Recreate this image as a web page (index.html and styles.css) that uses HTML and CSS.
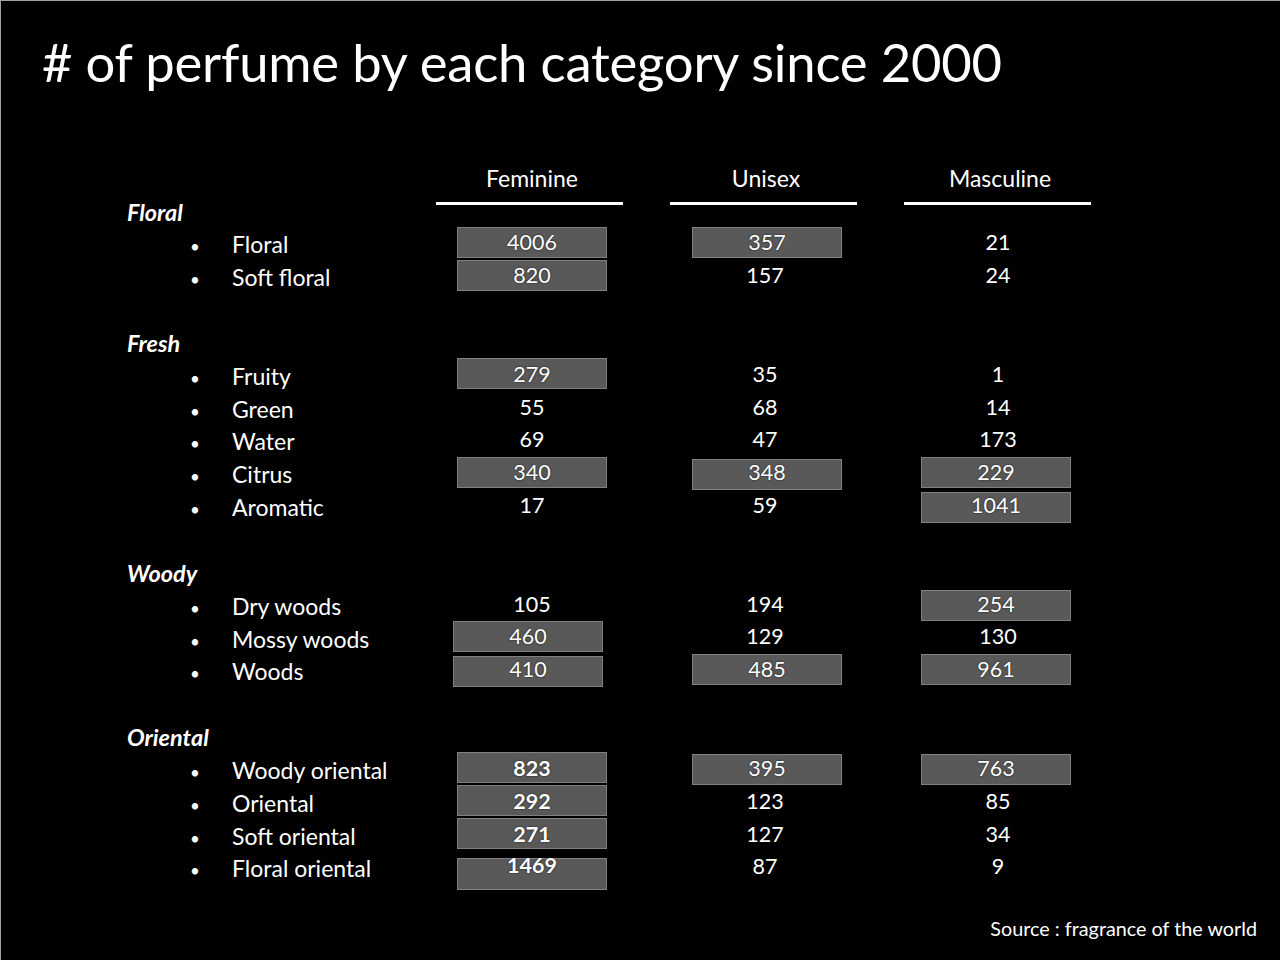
FILE: index.html
```html
<!DOCTYPE html>
<html>
<head>
<meta charset="utf-8">
<link rel="stylesheet" href="styles.css">
</head>
<body>
<div class="slide">
  <h1 class="title"># of perfume by each category since 2000</h1>
  <div class="table">
    <div class="cell label-cell"><div class="group">Floral</div></div>
    <div class="col-head">Feminine</div>
    <div class="col-head">Unisex</div>
    <div class="col-head">Masculine</div>

    <div class="item"><span class="bullet">•</span>Floral</div>
    <div class="val fem"><div class="box hl">4006</div></div>
    <div class="val uni"><div class="box hl">357</div></div>
    <div class="val mas"><div class="box">21</div></div>

    <div class="item"><span class="bullet">•</span>Soft floral</div>
    <div class="val fem"><div class="box hl">820</div></div>
    <div class="val uni"><div class="box">157</div></div>
    <div class="val mas"><div class="box">24</div></div>

    <div class="spacer"></div>

    <div class="group-row"><div class="group">Fresh</div></div>

    <div class="item"><span class="bullet">•</span>Fruity</div>
    <div class="val fem"><div class="box hl">279</div></div>
    <div class="val uni"><div class="box">35</div></div>
    <div class="val mas"><div class="box">1</div></div>

    <div class="item"><span class="bullet">•</span>Green</div>
    <div class="val fem"><div class="box">55</div></div>
    <div class="val uni"><div class="box">68</div></div>
    <div class="val mas"><div class="box">14</div></div>

    <div class="item"><span class="bullet">•</span>Water</div>
    <div class="val fem"><div class="box">69</div></div>
    <div class="val uni"><div class="box">47</div></div>
    <div class="val mas"><div class="box">173</div></div>

    <div class="item"><span class="bullet">•</span>Citrus</div>
    <div class="val fem"><div class="box hl">340</div></div>
    <div class="val uni"><div class="box hl down">348</div></div>
    <div class="val mas"><div class="box hl">229</div></div>

    <div class="item"><span class="bullet">•</span>Aromatic</div>
    <div class="val fem"><div class="box">17</div></div>
    <div class="val uni"><div class="box">59</div></div>
    <div class="val mas"><div class="box hl down">1041</div></div>

    <div class="spacer"></div>

    <div class="group-row"><div class="group">Woody</div></div>

    <div class="item"><span class="bullet">•</span>Dry woods</div>
    <div class="val fem"><div class="box">105</div></div>
    <div class="val uni"><div class="box">194</div></div>
    <div class="val mas"><div class="box hl down">254</div></div>

    <div class="item"><span class="bullet">•</span>Mossy woods</div>
    <div class="val fem"><div class="box hl left">460</div></div>
    <div class="val uni"><div class="box">129</div></div>
    <div class="val mas"><div class="box">130</div></div>

    <div class="item"><span class="bullet">•</span>Woods</div>
    <div class="val fem"><div class="box hl left down">410</div></div>
    <div class="val uni"><div class="box hl">485</div></div>
    <div class="val mas"><div class="box hl">961</div></div>

    <div class="spacer"></div>

    <div class="group-row"><div class="group">Oriental</div></div>

    <div class="item"><span class="bullet">•</span>Woody oriental</div>
    <div class="val fem"><div class="box hl b">823</div></div>
    <div class="val uni"><div class="box hl down">395</div></div>
    <div class="val mas"><div class="box hl down">763</div></div>

    <div class="item"><span class="bullet">•</span>Oriental</div>
    <div class="val fem"><div class="box hl b">292</div></div>
    <div class="val uni"><div class="box">123</div></div>
    <div class="val mas"><div class="box">85</div></div>

    <div class="item"><span class="bullet">•</span>Soft oriental</div>
    <div class="val fem"><div class="box hl b">271</div></div>
    <div class="val uni"><div class="box">127</div></div>
    <div class="val mas"><div class="box">34</div></div>

    <div class="item"><span class="bullet">•</span>Floral oriental</div>
    <div class="val fem"><div class="box hl b low">1469</div></div>
    <div class="val uni"><div class="box">87</div></div>
    <div class="val mas"><div class="box">9</div></div>
  </div>
  <div class="source">Source : fragrance of the world</div>
</div>
</body>
</html>
```

FILE: styles.css
```css
* { box-sizing: border-box; }
html, body { margin: 0; padding: 0; background: #000; }
.slide {
  width: 1280px;
  height: 960px;
  background: #000;
  color: #fff;
  font-family: Lato, "Open Sans", sans-serif;
  border-top: 1px solid #a0a0a0;
  border-left: 1px solid #a0a0a0;
  overflow: hidden;
  display: flex;
  flex-direction: column;
}
.title {
  margin: 0;
  padding: 31px 0 0 41px;
  font-size: 52.6px;
  line-height: 60px;
  font-weight: 400;
  letter-spacing: -0.2px;
  height: 163px;
  white-space: nowrap;
}
.table {
  display: grid;
  grid-template-columns: 388px 187px 187px 187px;
  column-gap: 47px;
  grid-auto-rows: 32.85px;
  grid-template-rows: 64.4px;
}
.label-cell { display: flex; align-items: flex-end; }
.group {
  height: 32.85px;
  line-height: 32.85px;
  padding-left: 126px;
  font-weight: 700;
  font-style: italic;
  font-size: 23.5px;
}
.group-row { grid-column: 1 / -1; }
.spacer { grid-column: 1 / -1; }
.col-head {
  font-size: 23px;
  line-height: 28px;
  text-align: center;
  padding-left: 5px;
  height: 41px;
  border-bottom: 3px solid #fff;
  padding-bottom: 10px;
}
.item {
  grid-column: 1 / 2;
  font-size: 23px;
  line-height: 32.85px;
  padding-left: 189px;
  white-space: nowrap;
}
.bullet {
  display: inline-block;
  width: 42px;
  font-size: 17px;
}
.val {
  display: flex;
  align-items: center;
  justify-content: center;
  padding-bottom: 5px;
}
.box {
  width: 150px;
  height: 31px;
  display: flex;
  align-items: center;
  justify-content: center;
  font-size: 21.5px;
  line-height: 24px;
  flex-shrink: 0;
}
.fem .box { margin-left: 5px; }
.uni .box { margin-left: 3px; }
.mas .box { margin-left: 1px; }
.box.hl {
  background: #595959;
  border: 1px solid #808080;
  text-shadow: 0 0 2px rgba(0,0,0,0.8);
}
.uni .box.hl { margin-left: 7px; }
.mas .box.hl { margin-left: -3px; }
.fem .box.left { margin-left: -3px; }
.box.down { margin-top: 4px; padding-bottom: 4px; }
.box.b { font-weight: 700; }
.box.low {
  height: 32px;
  margin-top: 15px;
  padding-bottom: 18px;
}
.source {
  margin-top: auto;
  align-self: flex-end;
  font-size: 19.8px;
  line-height: 24px;
  padding-right: 23px;
  padding-bottom: 20px;
}
```
